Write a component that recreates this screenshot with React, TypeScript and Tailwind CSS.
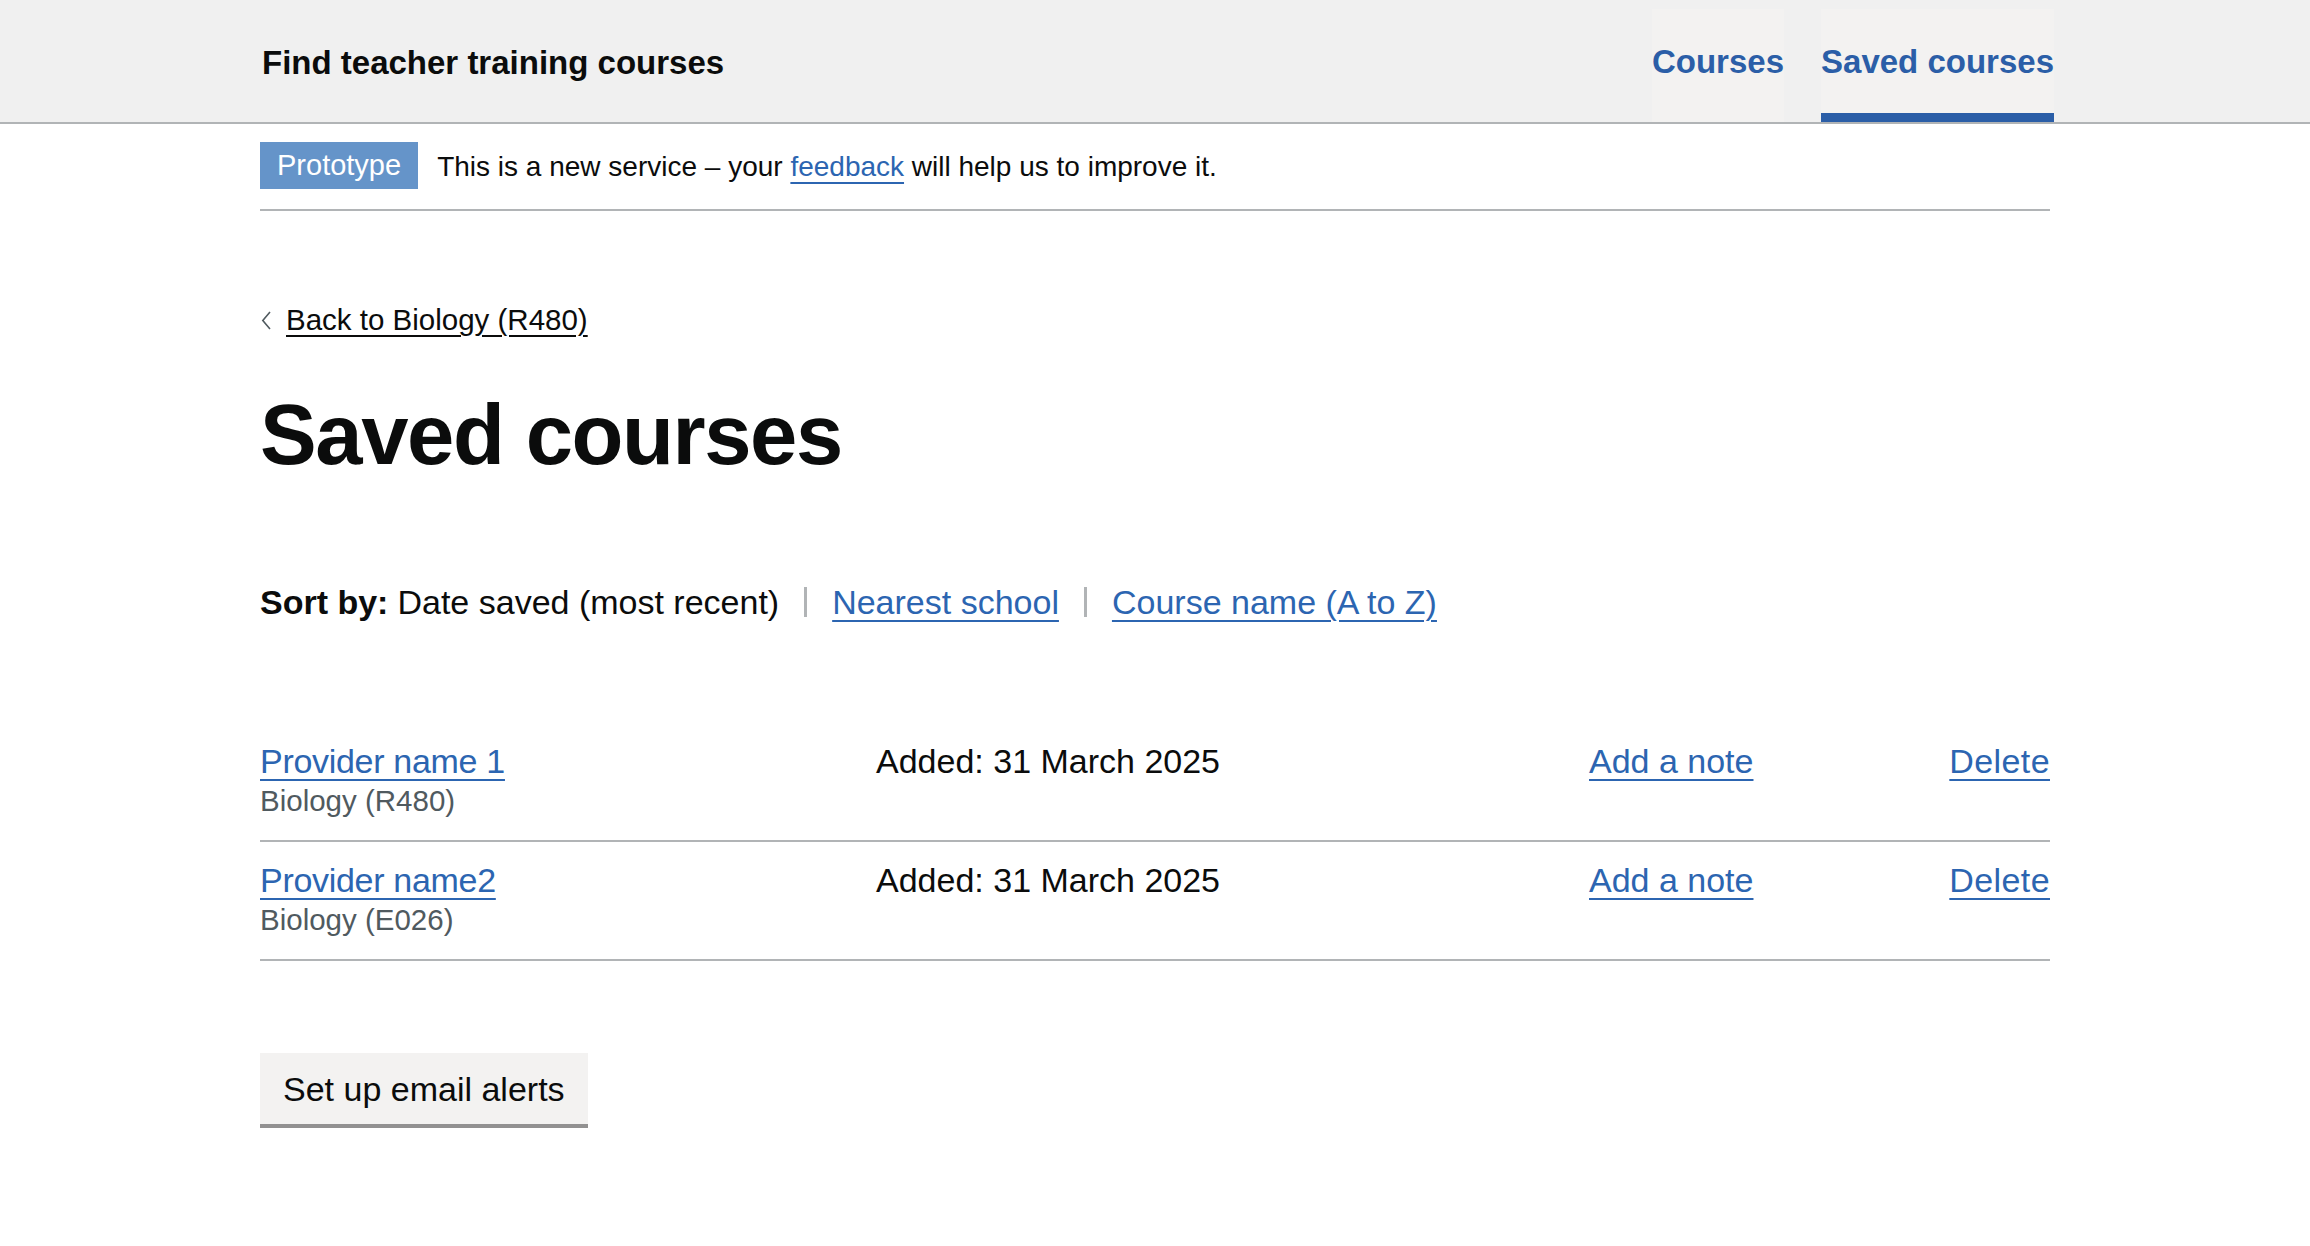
import clsx from 'clsx'

const navItems = [
  { label: 'Courses', href: '#', active: false },
  { label: 'Saved courses', href: '#', active: true },
]

const savedCourses = [
  { provider: 'Provider name 1', course: 'Biology (R480)', added: '31 March 2025' },
  { provider: 'Provider name2', course: 'Biology (E026)', added: '31 March 2025' },
]

const linkClass = 'text-[#2c65b1] underline decoration-2 underline-offset-[6px]'

export default function App() {
  return (
    <div className="min-h-screen bg-white font-['Liberation_Sans',Arial,sans-serif] text-[#0b0c0c]">
      {/* Header */}
      <header className="border-b-2 border-[#b1b4b6] bg-[#f0f0f0]">
        <div className="mx-auto flex h-[122px] w-[1790px] items-stretch justify-between">
          <a href="#" className="flex items-center pl-[2px] pt-[3px] text-[33px] font-bold leading-[40px] text-[#0b0c0c]">
            Find teacher training courses
          </a>
          <nav className="-mr-[4px] flex items-stretch gap-[37px] pt-[9px]">
            {navItems.map((item) => (
              <a
                key={item.label}
                href={item.href}
                className={clsx(
                  'flex items-center border-b-[9px] bg-[#f3f2f1] pt-[2px] text-[33px] font-bold leading-[40px] text-[#2b5ea7]',
                  item.active ? 'border-[#2b5ea7]' : 'border-transparent'
                )}
              >
                {item.label}
              </a>
            ))}
          </nav>
        </div>
      </header>

      {/* Phase banner */}
      <div className="mx-auto flex w-[1790px] items-center gap-[19px] border-b-2 border-[#b1b4b6] pb-[20px] pt-[18px]">
        <strong className="flex h-[47px] items-center bg-[#6594c9] px-[17px] text-[29px] font-normal text-white">
          Prototype
        </strong>
        <p className="pt-[3px] text-[28px] leading-[36px]">
          This is a new service – your{' '}
          <a href="#" className={linkClass}>
            feedback
          </a>{' '}
          will help us to improve it.
        </p>
      </div>

      <main className="mx-auto w-[1790px] pb-[120px]">
        {/* Back link */}
        <div className="mt-[91px] flex items-center gap-[14px] pl-[1px] text-[29.5px] leading-[36px]">
          <svg width="11" height="19" viewBox="0 0 11 19" fill="none" stroke="#505a5f" strokeWidth="1.6">
            <polyline points="9,1 1.8,9.5 9,18" />
          </svg>
          <a href="#" className="text-[#0b0c0c] underline decoration-[1.5px] underline-offset-[5px]">
            Back to Biology (R480)
          </a>
        </div>

        <h1 className="mt-[47px] text-[85px] font-bold leading-[100px] tracking-[-1.4px]">Saved courses</h1>

        {/* Sort */}
        <div className="mt-[95px] flex items-center text-[34px] leading-[44px]">
          <span className="font-bold">Sort by:</span>
          <span className="ml-[9px]">Date saved (most recent)</span>
          <span className="mx-[25px] h-[30px] w-[3px] bg-[#b1b4b6]" />
          <a href="#" className={linkClass}>
            Nearest school
          </a>
          <span className="mx-[25px] h-[30px] w-[3px] bg-[#b1b4b6]" />
          <a href="#" className={linkClass}>
            Course name (A to Z)
          </a>
        </div>

        {/* Saved list */}
        <div className="mt-[99px]">
          {savedCourses.map((row) => (
            <div
              key={row.provider}
              className="grid grid-cols-[616px_713px_1fr] border-b-2 border-[#b1b4b6] pb-[21px] pt-[16px]"
            >
              <div>
                <a href="#" className={clsx(linkClass, 'block w-fit text-[34px] leading-[44px] tracking-[-0.3px]')}>
                  {row.provider}
                </a>
                <p className="text-[29.5px] leading-[36px] text-[#505a5f]">{row.course}</p>
              </div>
              <p className="text-[34px] leading-[44px]">Added: {row.added}</p>
              <div className="flex items-start justify-between text-[34px] leading-[44px]">
                <a href="#" className={linkClass}>
                  Add a note
                </a>
                <a href="#" className={clsx(linkClass, 'tracking-[0.4px]')}>
                  Delete
                </a>
              </div>
            </div>
          ))}
        </div>

        <button className="mt-[92px] flex h-[71px] items-center bg-[#f3f2f1] px-[23px] text-[34px] leading-[44px] text-[#0b0c0c] shadow-[0_4px_0_#929191]">
          Set up email alerts
        </button>
      </main>
    </div>
  )
}
